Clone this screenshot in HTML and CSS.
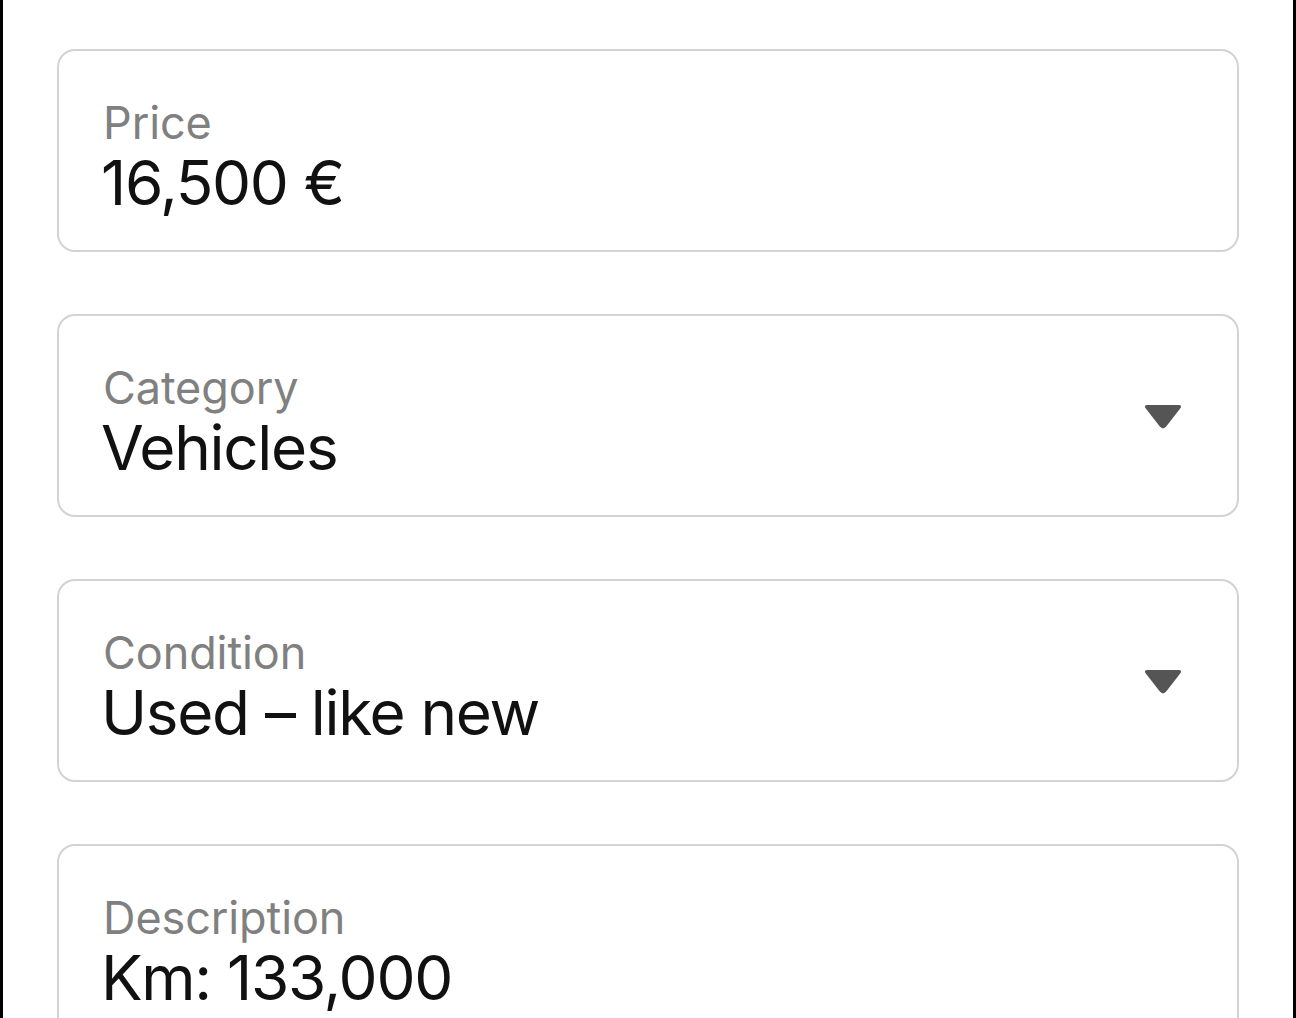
FILE: index.html
```html
<!DOCTYPE html>
<html>
<head>
<meta charset="utf-8">
<link rel="stylesheet" href="styles.css">
</head>
<body>
<div class="frame">
  <div class="field">
    <div class="text">
      <div class="label">Price</div>
      <div class="value">16,500 €</div>
    </div>
  </div>
  <div class="field">
    <div class="text">
      <div class="label">Category</div>
      <div class="value">Vehicles</div>
    </div>
    <svg class="chev" width="40" height="28" viewBox="0 0 40 28"><path d="M4.5 2 H35.5 Q39.8 2 37 5.8 L23.2 23.6 Q20 27.2 16.8 23.6 L3 5.8 Q0.2 2 4.5 2 Z" fill="#555"/></svg>
  </div>
  <div class="field">
    <div class="text">
      <div class="label">Condition</div>
      <div class="value">Used – like new</div>
    </div>
    <svg class="chev" width="40" height="28" viewBox="0 0 40 28"><path d="M4.5 2 H35.5 Q39.8 2 37 5.8 L23.2 23.6 Q20 27.2 16.8 23.6 L3 5.8 Q0.2 2 4.5 2 Z" fill="#555"/></svg>
  </div>
  <div class="field">
    <div class="text">
      <div class="label">Description</div>
      <div class="value">Km: 133,000</div>
    </div>
  </div>
</div>
</body>
</html>
```
FILE: styles.css
```css
html, body {
  margin: 0;
  padding: 0;
  background: #fff;
}
body {
  height: 1018px;
  overflow: hidden;
}
.frame {
  height: 1018px;
  box-sizing: border-box;
  border-left: 3px solid #000;
  border-right: 3px solid #000;
  padding: 49px 54px 0 54px;
  display: flex;
  flex-direction: column;
  gap: 62px;
  font-family: Inter, "Liberation Sans", sans-serif;
}
.field {
  flex: 0 0 auto;
  height: 203px;
  box-sizing: border-box;
  border: 2px solid #d3d3d3;
  border-radius: 18px;
  padding: 0 54px 0 42px;
  display: flex;
  align-items: center;
  justify-content: space-between;
}
.text {
  display: flex;
  flex-direction: column;
  padding-top: 16px;
}
.label {
  color: #808080;
  font-size: 45px;
  line-height: 48px;
  letter-spacing: -0.1px;
  padding-left: 2px;
}
.value {
  color: #111;
  font-size: 62px;
  line-height: 72px;
  letter-spacing: -1.3px;
}
.chev {
  display: block;
  margin-top: 2px;
}
```
